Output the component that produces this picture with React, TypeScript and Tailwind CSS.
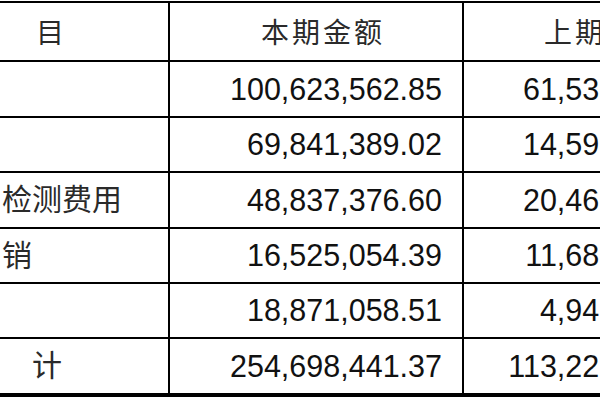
import React from 'react';

type Row = {
  label: string;
  labelPad: string;
  current: string;
  previous: string;
  height: string;
  border: string;
};

const rows: Row[] = [
  { label: '', labelPad: 'pl-[2px]', current: '100,623,562.85', previous: '61,532,418.76', height: 'h-[54px]', border: 'border-b-2' },
  { label: '', labelPad: 'pl-[2px]', current: '69,841,389.02', previous: '14,596,203.55', height: 'h-[53px]', border: 'border-b-2' },
  { label: '检测费用', labelPad: 'pl-[2px]', current: '48,837,376.60', previous: '20,463,871.09', height: 'h-[54px]', border: 'border-b-2' },
  { label: '销', labelPad: 'pl-[2px]', current: '16,525,054.39', previous: '11,687,342.18', height: 'h-[53px]', border: 'border-b-2' },
  { label: '', labelPad: 'pl-[2px]', current: '18,871,058.51', previous: '4,945,617.33', height: 'h-[53px]', border: 'border-b-2' },
  { label: '计', labelPad: 'pl-[32px]', current: '254,698,441.37', previous: '113,225,452.91', height: 'h-[54px]', border: 'border-b-[4px]' },
];

const font = "font-['Liberation_Sans','Noto_Sans_CJK_SC',sans-serif]";

const App: React.FC = () => {
  return (
    <div className={`w-[600px] h-[400px] overflow-hidden bg-white pt-px ${font}`}>
      <div className="w-[740px] border-t-2 border-black">
        {/* Header */}
        <div className="flex h-[57px] border-b-2 border-black box-content">
          <div className="w-[170px] shrink-0 border-r-2 border-black flex items-center pl-[36px] pt-[4px] text-[28px] leading-none text-[#2a2a2a]">
            目
          </div>
          <div className="w-[294px] shrink-0 border-r-2 border-black flex items-center pl-[91px] pt-[4px] text-[28px] leading-none tracking-[3px] text-[#2a2a2a]">
            本期金额
          </div>
          <div className="w-[270px] shrink-0 border-r-2 border-black flex items-center pl-[80px] pt-[4px] text-[28px] leading-none tracking-[3px] text-[#2a2a2a]">
            上期金额
          </div>
        </div>

        {/* Data rows */}
        {rows.map((row, i) => (
          <div key={i} className={`flex ${row.height} ${row.border} border-black box-content`}>
            <div className={`w-[170px] shrink-0 border-r-2 border-black flex items-center ${row.labelPad} text-[30px] leading-none text-[#2a2a2a] whitespace-nowrap`}>
              {row.label}
            </div>
            <div className="w-[294px] shrink-0 border-r-2 border-black flex items-center justify-end pr-[20px] text-[30.5px] leading-none text-[#111]">
              {row.current}
            </div>
            <div className="w-[270px] shrink-0 border-r-2 border-black flex items-center justify-end pr-[14px] text-[30.5px] leading-none text-[#111]">
              {row.previous}
            </div>
          </div>
        ))}
      </div>
    </div>
  );
};

export default App;
